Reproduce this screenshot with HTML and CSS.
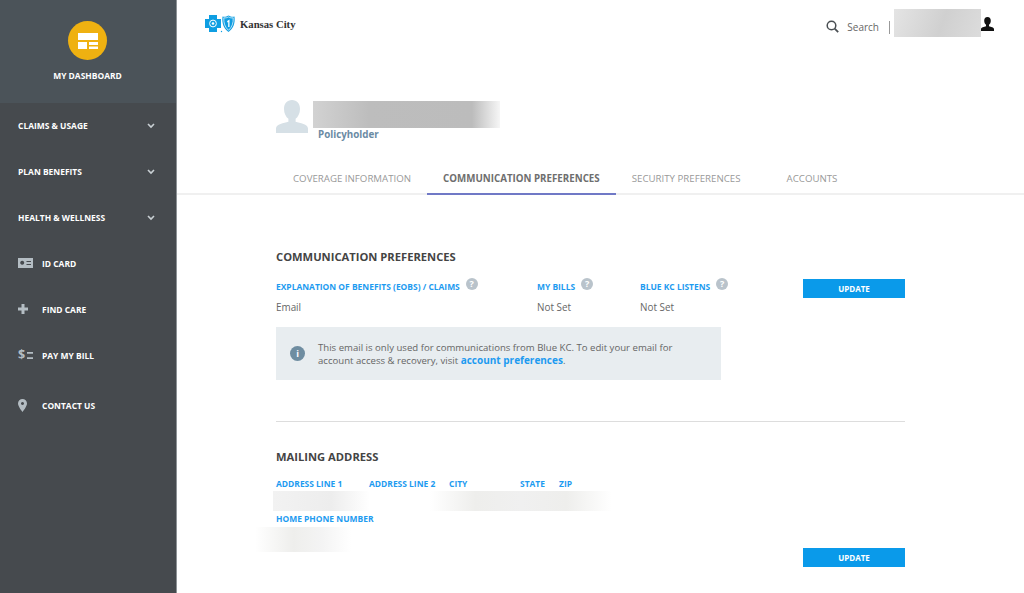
FILE: index.html
```html
<!DOCTYPE html>
<html lang="en">
<head>
<meta charset="utf-8">
<title>Communication Preferences</title>
<link rel="stylesheet" href="styles.css">
</head>
<body>
<div class="app">
  <aside class="sidebar">
    <a class="dash">
      <span class="dash-circle">
        <svg width="20" height="16" viewBox="0 0 20 16"><path fill="#fff" d="M0 0h20v7H0zM0 9h9v7H0zM11 9h9v3h-9zM11 13.500h9V16h-9z"/></svg>
      </span>
      <span class="dash-label">MY DASHBOARD</span>
    </a>
    <nav class="nav">
      <a class="nav-item"><span class="nav-text">CLAIMS &amp; USAGE</span><svg class="chev" width="8" height="6" viewBox="0 0 8 6"><path d="M1 1l3 3 3-3" fill="none" stroke="#c9d0d4" stroke-width="1.600"/></svg></a>
      <a class="nav-item"><span class="nav-text">PLAN BENEFITS</span><svg class="chev" width="8" height="6" viewBox="0 0 8 6"><path d="M1 1l3 3 3-3" fill="none" stroke="#c9d0d4" stroke-width="1.600"/></svg></a>
      <a class="nav-item"><span class="nav-text">HEALTH &amp; WELLNESS</span><svg class="chev" width="8" height="6" viewBox="0 0 8 6"><path d="M1 1l3 3 3-3" fill="none" stroke="#c9d0d4" stroke-width="1.600"/></svg></a>
      <a class="nav-item"><span class="nav-icon"><svg width="15" height="10" viewBox="0 0 15 10"><path fill="#b4bdc3" fill-rule="evenodd" d="M0 0h15v10H0zM4.200 2.800a2 2 0 1 0 .01 0zM8.500 3v1h4.500V3zM8.500 6v1h4.500V6z"/></svg></span><span class="nav-text">ID CARD</span></a>
      <a class="nav-item"><span class="nav-icon"><svg width="10" height="10" viewBox="0 0 10 10"><path fill="#b4bdc3" d="M3.500 0h3v3.500H10v3H6.500V10h-3V6.500H0v-3h3.500z"/></svg></span><span class="nav-text">FIND CARE</span></a>
      <a class="nav-item"><span class="nav-icon nav-pay"><span class="pay-sign">$</span><svg width="6" height="7" viewBox="0 0 6 7"><path fill="#b4bdc3" d="M0 0h6v1.800H0zM0 5.200h6V7H0z"/></svg></span><span class="nav-text">PAY MY BILL</span></a>
      <a class="nav-item nav-contact"><span class="nav-icon"><svg width="9" height="13" viewBox="0 0 9 13"><path fill="#b4bdc3" fill-rule="evenodd" d="M4.500 0A4.500 4.500 0 0 1 9 4.500C9 7.500 4.500 13 4.500 13S0 7.500 0 4.500A4.500 4.500 0 0 1 4.500 0zm0 3a1.500 1.500 0 1 0 .01 0z"/></svg></span><span class="nav-text">CONTACT US</span></a>
    </nav>
  </aside>
  <main class="main">
    <header class="topbar">
      <div class="logo">
        <svg width="31" height="18" viewBox="0 0 31 18">
          <path fill="#0f9ee2" d="M4 0h8v4h4v9h-4v4H4v-4H0V4h4z"/>
          <circle cx="8" cy="8.500" r="3.400" fill="none" stroke="#fff" stroke-width="1"/>
          <circle cx="8" cy="8.500" r="1.300" fill="#fff"/>
          <circle cx="16.500" cy="16.500" r=".7" fill="#0f9ee2"/>
          <path fill="#0f9ee2" d="M17.500 1.500c2 .6 3.500.4 6-1 2.500 1.400 4 1.600 6 1 .8 6.500-1 12-6 15.500-5-3.500-6.800-9-6-15.500z"/>
          <path fill="none" stroke="#fff" stroke-width=".7" d="M18.800 2.800c1.800.3 3.200 0 4.700-.9 1.500.9 2.900 1.200 4.700.9.300 5.200-1.200 9.600-4.700 12.500-3.500-2.900-5-7.300-4.700-12.500z"/>
          <path fill="#fff" d="M22.200 6l2.300-1.500v7.500h-1.300V7l-1 .5z"/>
        </svg>
        <span class="logo-text">Kansas City</span>
      </div>
      <div class="tools">
        <svg class="search-icon" width="13" height="13" viewBox="0 0 13 13"><circle cx="5.500" cy="5.500" r="4.300" fill="none" stroke="#4a4f53" stroke-width="1.500"/><path d="M8.700 8.700l3.500 3.500" stroke="#4a4f53" stroke-width="1.800"/></svg>
        <span class="search-text">Search</span>
        <span class="tool-sep"></span>
        <span class="blur blur-user"></span>
        <svg class="user-icon" width="13" height="14" viewBox="0 0 13 14"><path fill="#111" d="M6.500 0C8.700 0 9.800 1.600 9.800 3.800c0 1.800-.8 3.300-1.800 4v1.400c1.800.5 5 1.100 5 2.800V14H0v-2c0-1.700 3.200-2.300 5-2.800V7.800c-1-.7-1.800-2.200-1.800-4C3.200 1.600 4.300 0 6.500 0z"/></svg>
      </div>
    </header>
    <section class="profile">
      <svg class="avatar" width="32" height="33" viewBox="0 0 32 33"><path fill="#d6e0e6" d="M16 0c5 0 8 3.600 8 9 0 4.400-2 8-4.400 9.800v3c4.400 1.200 12.400 2.600 12.400 6.700V33H0v-4.500c0-4.100 8-5.500 12.400-6.700v-3C10 17 8 13.400 8 9c0-5.400 3-9 8-9z"/></svg>
      <div class="profile-info">
        <div class="blur blur-name"></div>
        <div class="role">Policyholder</div>
      </div>
    </section>
    <nav class="tabs">
      <a class="tab">COVERAGE INFORMATION</a>
      <a class="tab tab-active">COMMUNICATION PREFERENCES</a>
      <a class="tab">SECURITY PREFERENCES</a>
      <a class="tab tab-last">ACCOUNTS</a>
    </nav>
    <div class="content">
      <section class="prefs">
        <h2 class="heading">COMMUNICATION PREFERENCES</h2>
        <div class="pref-grid">
          <div class="label-row"><span class="label">EXPLANATION OF BENEFITS (EOBS) / CLAIMS</span><span class="help">?</span></div>
          <div class="label-row"><span class="label">MY BILLS</span><span class="help">?</span></div>
          <div class="label-row"><span class="label">BLUE KC LISTENS</span><span class="help">?</span></div>
          <a class="btn">UPDATE</a>
          <div class="value">Email</div>
          <div class="value">Not Set</div>
          <div class="value">Not Set</div>
        </div>
        <div class="notice">
          <span class="notice-icon">i</span>
          <p class="notice-text">This email is only used for communications from Blue KC. To edit your email for account access &amp; recovery, visit <a class="link">account preferences</a>.</p>
        </div>
      </section>
      <section class="address">
        <h2 class="heading">MAILING ADDRESS</h2>
        <div class="addr-grid">
          <span class="label">ADDRESS LINE 1</span>
          <span class="label">ADDRESS LINE 2</span>
          <span class="label">CITY</span>
          <span class="label">STATE</span>
          <span class="label">ZIP</span>
        </div>
        <div class="addr-values">
          <span class="blur blur-a1"></span>
          <span class="blur blur-a2"></span>
        </div>
        <div class="label phone-label">HOME PHONE NUMBER</div>
        <div class="blur blur-phone"></div>
        <div class="addr-action"><a class="btn">UPDATE</a></div>
      </section>
    </div>
  </main>
</div>
</body>
</html>
```
FILE: styles.css
```css
* { box-sizing: border-box; }
html, body { margin: 0; height: 100%; }
body { font-family: "Open Sans", "Liberation Sans", sans-serif; color: #555; background: #fff; overflow: hidden; }
a { cursor: pointer; }

.app { display: flex; height: 593px; }

.sidebar { width: 177px; flex: none; background: #464a4e; border-right: 1px solid #8d9296; }
.dash { height: 103px; background: #4b5359; display: flex; flex-direction: column; align-items: center; padding: 21px 1px 0 0; }
.dash-circle { width: 39px; height: 39px; border-radius: 50%; background: #efb111; display: flex; align-items: center; justify-content: center; }
.dash-label { margin-top: 10px; font-size: 8.450px; line-height: 12px; font-weight: 700; color: #fff; }

.nav-item { height: 46px; display: flex; align-items: center; padding: 0 21px 2px 18px; }
.nav-text { font-size: 8.450px; font-weight: 700; color: #fff; flex: 1; }
.chev { margin-top: 2px; }
.nav-icon { width: 24px; flex: none; display: flex; align-items: center; }
.nav-pay { gap: 2px; }
.pay-sign { font-size: 12.500px; line-height: 12px; font-weight: 700; color: #b4bdc3; }
.nav-contact { margin-top: 4px; }

.main { flex: 1; min-width: 0; }
.topbar { height: 100px; display: flex; justify-content: space-between; align-items: flex-start; padding: 9px 30px 0 28px; }
.logo { display: flex; align-items: center; gap: 4px; margin-top: 6px; }
.logo-text { font-family: "Liberation Serif", serif; font-size: 10.700px; font-weight: 700; color: #333; }
.tools { display: flex; align-items: center; height: 28px; }
.search-icon { margin-right: 8px; margin-top: 7px; }
.search-text { font-size: 10px; color: #666; margin-top: 8px; margin-right: 10px; }
.tool-sep { width: 1px; height: 13px; background: #999; margin-top: 8px; margin-right: 4px; }
.user-icon { margin-top: 2px; }

.blur { display: block; }
.blur-user { width: 87px; height: 28px; background: linear-gradient(110deg, #e4e4e4, #d0d0d0 55%, #dcdcdc); }
.blur-name { width: 187px; height: 27px; background: linear-gradient(90deg, #d2d2d2, #bdbdbd 30%, #bcbcbc 85%, #f6f6f6); }
.blur-a1 { width: 97px; height: 20px; background: linear-gradient(90deg, #f2f2f2, #ededed 60%, #fff); }
.blur-a2 { width: 182px; height: 20px; margin-left: 60px; background: linear-gradient(90deg, #fff, #eeeeec 25%, #f0f0f0 50%, #eeeeec 75%, #fff); }
.blur-phone { width: 96px; height: 25px; margin: 2px 0 0 -21px; background: linear-gradient(90deg, #fff, #eeeeec 40%, #f4f4f4 70%, #fff); }

.profile { display: flex; padding-left: 99px; height: 70px; }
.avatar { flex: none; }
.profile-info { margin: 1px 0 0 5px; }
.role { font-size: 9.800px; line-height: 13px; font-weight: 700; color: #6b8ba4; padding: 0 0 0 5px; }

.tabs { display: flex; padding-left: 100px; height: 25px; border-bottom: 2px solid #f0f0f0; }
.tab { padding: 0 16px; height: 25px; font-size: 9.700px; line-height: 17px; color: #999; white-space: nowrap; }
.tab-active { font-size: 9.750px; font-weight: 700; color: #6e6e6e; border-bottom: 2px solid #7079c6; }
.tab-last { margin-left: 14px; }

.content { padding: 0 119px 0 99px; }
.heading { margin: 0; font-size: 11.200px; line-height: 16px; font-weight: 700; color: #444; }
.prefs { padding-top: 54px; height: 227px; border-bottom: 1px solid #ddd; }
.pref-grid { display: grid; grid-template-columns: 261px 103px 163px 102px; grid-template-rows: 25px 16px; margin-top: 9px; align-items: center; }
.label-row { display: flex; align-items: center; gap: 6px; }
.label { font-size: 8.450px; line-height: 12px; font-weight: 700; color: #1d9bf0; white-space: nowrap; }
.help { width: 12px; height: 12px; margin-top: -5px; border-radius: 50%; background: #b9c3cb; color: #fff; font-size: 9px; line-height: 12px; font-weight: 700; text-align: center; }
.value { font-size: 9.900px; line-height: 14px; color: #666; }
.btn { display: block; width: 102px; height: 19px; background: #0a9aea; color: #fff; font-size: 8px; line-height: 19px; font-weight: 700; text-align: center; }
.pref-grid .btn { align-self: start; margin-top: 5px; }

.notice { display: flex; align-items: center; width: 445px; height: 53px; margin-top: 12px; padding: 0 30px 0 14px; background: #e8edf0; }
.notice-icon { flex: none; width: 15px; height: 15px; border-radius: 50%; background: #6f8da1; color: #fff; font-size: 9px; line-height: 15px; font-weight: 700; text-align: center; margin-right: 13px; }
.notice-text { margin: 0; font-size: 9.600px; line-height: 13px; color: #666; }
.link { display: inline-block; color: #1d9bf0; font-weight: 700; font-size: 10px; }

.address { padding-top: 27px; }
.addr-grid { display: grid; grid-template-columns: 93px 80px 71px 39px auto; margin-top: 13px; }
.addr-values { display: flex; margin: 1px 0 0 -3px; height: 20px; }
.phone-label { margin-top: 2px; }
.addr-action { display: flex; justify-content: flex-end; margin-top: -4px; }
```
